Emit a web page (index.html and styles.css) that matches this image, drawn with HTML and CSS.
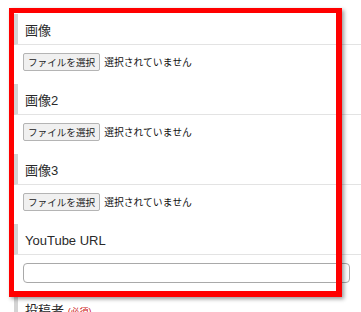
FILE: index.html
```html
<!DOCTYPE html>
<html lang="ja">
<head>
<meta charset="UTF-8">
<meta name="viewport" content="width=device-width, initial-scale=1.0">
<title>投稿フォーム</title>
<link rel="stylesheet" href="styles.css">
</head>
<body>

<div class="form">
    <div class="midashi">画像</div>
    <div class="campo">
        <button class="file-btn">ファイルを選択</button><span class="file-name">選択されていません</span>
    </div>

    <div class="midashi">画像2</div>
    <div class="campo">
        <button class="file-btn">ファイルを選択</button><span class="file-name">選択されていません</span>
    </div>

    <div class="midashi">画像3</div>
    <div class="campo">
        <button class="file-btn">ファイルを選択</button><span class="file-name">選択されていません</span>
    </div>

    <div class="midashi">YouTube URL</div>
    <div class="campo campo-url">
        <input type="text" class="casella-testo">
    </div>

    <div class="midashi">投稿者 <span class="obbligo">(必須)</span></div>
</div>

<div class="cornice"></div>

</body>
</html>
```

FILE: styles.css
```css
body{margin: 0;
    background-color: #ffffff;
    font-family: "Liberation Sans", "Noto Sans CJK JP", sans-serif;
    color: #222222;
    overflow: hidden;}

.form{margin-left: 14px;
      padding-top: 14px;}

.midashi{height: 30px;
         line-height: 33px;
         padding-left: 7px;
         border-left: 4px solid #d4d4d4;
         border-bottom: 1px solid #e3e3e3;
         font-size: 13px;
         color: #2a2a2a;}

.campo{height: 39px;
       padding: 8px 0 0 9px;
       box-sizing: border-box;
       display: flex;
       align-items: flex-start;}

.file-btn{height: 18px;
          padding: 0 4px;
          font-family: "Noto Sans CJK JP", sans-serif;
          font-size: 9.6px;
          color: #222222;
          background-color: #f0f0f0;
          border: 1px solid #b4b4b4;
          border-radius: 2px;}

.file-name{margin-left: 4px;
           line-height: 18px;
           font-family: "Noto Sans CJK JP", sans-serif;
           font-size: 9.8px;
           color: #111111;}

.casella-testo{width: 327px;
               height: 20px;
               box-sizing: border-box;
               border: 1px solid #a9a9a9;
               border-radius: 4px;
               background-color: #ffffff;}

.obbligo{font-size: 9px;
         color: #cc1111;}

.cornice{position: absolute;
         left: 9px;
         top: 8px;
         width: 333px;
         height: 289px;
         box-sizing: border-box;
         border: 5px solid #ff0000;
         border-right-width: 6px;
         border-bottom-width: 6px;
         box-shadow: 2px 2px 4px rgba(0, 0, 0, 0.4);}
```
